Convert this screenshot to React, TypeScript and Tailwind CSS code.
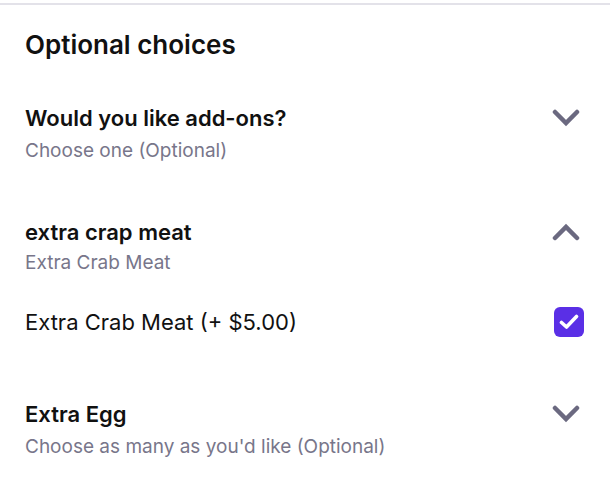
import React from "react";

const Chevron = ({ up = false }: { up?: boolean }) => (
  <svg width="28" height="18" viewBox="0 0 28 18" className="block">
    <polyline
      points={up ? "3,15 14,4 25,15" : "3,3 14,14 25,3"}
      fill="none"
      stroke="#6b6980"
      strokeWidth="4.5"
      strokeLinecap="round"
      strokeLinejoin="miter"
    />
  </svg>
);

const Check = () => (
  <div className="w-[30px] h-[30px] rounded-[6px] bg-[#5a2fe6] flex items-center justify-center">
    <svg width="20" height="16" viewBox="0 0 20 16">
      <polyline
        points="2.5,8.5 7.5,13 17.5,2.5"
        fill="none"
        stroke="#ffffff"
        strokeWidth="3.6"
        strokeLinecap="round"
        strokeLinejoin="round"
      />
    </svg>
  </div>
);

export default function App() {
  return (
    <div
      className="w-[610px] h-[482px] bg-white overflow-hidden"
      style={{ fontFamily: "Inter, 'Noto Sans', sans-serif" }}
    >
      <div className="mt-[3px] h-[2px] bg-[#e3e2e9]" />
      <div className="pl-[25px]">
        <div className="pt-[24px] text-[26px] leading-[32px] font-semibold text-[#111111]">
          Optional choices
        </div>

        <div className="mt-[43px] flex items-center justify-between pr-[30px]">
          <div className="text-[22px] leading-[28px] font-semibold text-[#111111]">
            Would you like add-ons?
          </div>
          <Chevron />
        </div>
        <div className="mt-[7px] text-[19px] leading-[24px] text-[#78768a]">
          Choose one (Optional)
        </div>

        <div className="mt-[55px] flex items-center justify-between pr-[30px]">
          <div className="text-[22px] leading-[28px] font-semibold text-[#111111]">
            extra crap meat
          </div>
          <Chevron up />
        </div>
        <div className="mt-[5px] text-[19px] leading-[24px] text-[#78768a]">
          Extra Crab Meat
        </div>

        <div className="mt-[32px] flex items-center justify-between pr-[26px]">
          <div className="text-[22px] leading-[30px] text-[#111111]">
            Extra Crab Meat (+ $5.00)
          </div>
          <Check />
        </div>

        <div className="mt-[63px] flex items-center justify-between pr-[30px]">
          <div className="text-[22px] leading-[28px] font-semibold text-[#111111]">
            Extra Egg
          </div>
          <Chevron />
        </div>
        <div className="mt-[7px] text-[19px] leading-[24px] text-[#78768a]">
          Choose as many as you'd like (Optional)
        </div>
      </div>
    </div>
  );
}
